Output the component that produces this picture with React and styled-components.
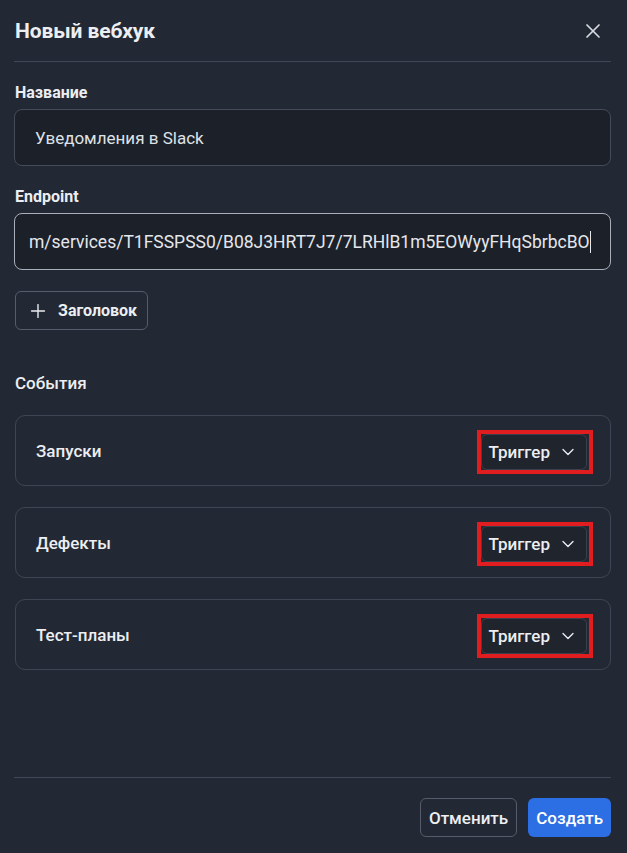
import React from 'react';
import styled, { createGlobalStyle } from 'styled-components';
import { X, Plus, ChevronDown } from 'lucide-react';

const events = ['Запуски', 'Дефекты', 'Тест-планы'];

const App = () => {
	return (
		<>
			<GlobalStyle />
			<Panel>
				<Header>
					<Title>Новый вебхук</Title>
					<CloseButton aria-label='Закрыть'>
						<X size={24} strokeWidth={1.7} />
					</CloseButton>
				</Header>
				<Body>
					<Field>
						<Label>Название</Label>
						<Input defaultValue='Уведомления в Slack' />
					</Field>
					<Field>
						<Label>Endpoint</Label>
						<FakeInput $focused>
							<EndpointText>m/services/T1FSSPSS0/B08J3HRT7J7/7LRHlB1m5EOWyyFHqSbrbcBO</EndpointText>
							<Caret />
						</FakeInput>
					</Field>
					<GhostButton>
						<Plus size={22} strokeWidth={1.5} />
						Заголовок
					</GhostButton>
					<SectionTitle>События</SectionTitle>
					<EventList>
						{events.map((name) => (
							<EventCard key={name}>
								<EventName>{name}</EventName>
								<Highlight>
									<TriggerButton>
										Триггер
										<ChevronDown size={20} strokeWidth={1.6} />
									</TriggerButton>
								</Highlight>
							</EventCard>
						))}
					</EventList>
				</Body>
				<Footer>
					<SecondaryButton>Отменить</SecondaryButton>
					<PrimaryButton>Создать</PrimaryButton>
				</Footer>
			</Panel>
		</>
	);
};

const GlobalStyle = createGlobalStyle`
	* { box-sizing: border-box; }
	html, body {
		margin: 0;
		background: #232934;
		color: #e4e7ec;
		font-family: Roboto, "Noto Sans", sans-serif;
	}
`;
const Panel = styled.div`
	min-height: 853px;
	display: flex;
	flex-direction: column;
	padding: 0 16px 0 14px;
`;
const Header = styled.div`
	height: 62px;
	display: flex;
	align-items: center;
	justify-content: space-between;
	border-bottom: 1px solid #414756;
`;
const Title = styled.h2`
	margin: 0 0 0 1px;
	font-size: 21px;
	font-weight: 700;
	color: #eceef2;
	letter-spacing: -0.1px;
`;
const CloseButton = styled.button`
	display: flex;
	background: none;
	border: none;
	padding: 0;
	margin-right: 6px;
	color: #d6d9df;
`;
const Body = styled.div`
	flex: 1;
	padding-top: 21px;
`;
const Field = styled.div`
	display: flex;
	flex-direction: column;
	gap: 7px;
	margin-bottom: 21px;
`;
const Label = styled.label`
	font-size: 16px;
	font-weight: 700;
	color: #eceef2;
	padding-left: 1px;
`;
const Input = styled.input`
	height: 57px;
	padding: 0 20px;
	background: #1c2029;
	border: 1px solid #454b59;
	border-radius: 8px;
	color: #dfe2e7;
	font-family: inherit;
	font-size: 17px;
	outline: none;
`;
const FakeInput = styled.div`
	height: 57px;
	display: flex;
	align-items: center;
	padding: 0 14px;
	background: #1c2029;
	border: 1px solid ${({ $focused }) => ($focused ? '#a9aeb8' : '#454b59')};
	border-radius: 8px;
	overflow: hidden;
`;
const EndpointText = styled.span`
	font-size: 17.5px;
	color: #e4e7ec;
	white-space: nowrap;
`;
const Caret = styled.span`
	width: 1px;
	height: 22px;
	background: #e4e7ec;
	flex-shrink: 0;
`;
const GhostButton = styled.button`
	display: flex;
	align-items: center;
	gap: 9px;
	height: 39px;
	padding: 0 10px 0 11px;
	margin: 0 0 0 1px;
	background: transparent;
	border: 1px solid #555c6b;
	border-radius: 6px;
	color: #eceef2;
	font-family: inherit;
	font-size: 16px;
	font-weight: 700;
`;
const SectionTitle = styled.h3`
	margin: 43px 0 22px 1px;
	font-size: 17px;
	font-weight: 500;
	color: #eceef2;
`;
const EventList = styled.div`
	display: flex;
	flex-direction: column;
	gap: 21px;
	padding-left: 1px;
`;
const EventCard = styled.div`
	height: 71px;
	display: flex;
	align-items: center;
	justify-content: space-between;
	padding: 0 17px 0 20px;
	border: 1px solid #3f4554;
	border-radius: 10px;
`;
const EventName = styled.span`
	font-size: 17px;
	font-weight: 500;
	color: #eceef2;
`;
const Highlight = styled.div`
	border: 4px solid #e11d1f;
	padding: 0 2px 0 0;
	display: flex;
	margin-top: 2px;
`;
const TriggerButton = styled.button`
	display: flex;
	align-items: center;
	gap: 8px;
	height: 36px;
	padding: 0 8px 0 6px;
	background: #1f242d;
	border: 1px solid #3a404d;
	border-radius: 6px;
	color: #eceef2;
	font-family: inherit;
	font-size: 17px;
	font-weight: 500;
`;
const Footer = styled.div`
	display: flex;
	justify-content: flex-end;
	gap: 11px;
	padding: 20px 0 16px;
	border-top: 1px solid #414756;
`;
const SecondaryButton = styled.button`
	height: 39px;
	padding: 0 8px;
	background: transparent;
	border: 1px solid #555c6b;
	border-radius: 6px;
	color: #eceef2;
	font-family: inherit;
	font-size: 17px;
	font-weight: 500;
`;
const PrimaryButton = styled.button`
	height: 39px;
	padding: 0 8px;
	background: #2c6ee3;
	border: none;
	border-radius: 6px;
	color: #ffffff;
	font-family: inherit;
	font-size: 17px;
	font-weight: 500;
`;

export default App;
